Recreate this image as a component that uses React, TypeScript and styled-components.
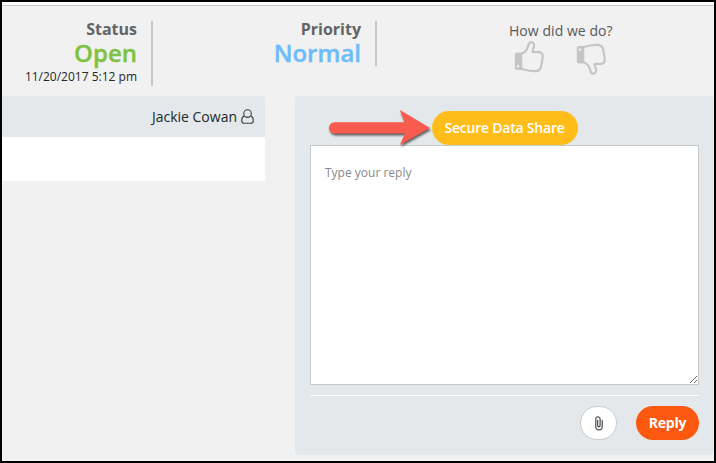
import React from "react";
import styled, { createGlobalStyle } from "styled-components";

const Global = createGlobalStyle`
  * { box-sizing: border-box; }
  body { margin: 0; font-family: "Open Sans", sans-serif; color: #23282c; }
`;
const Frame = styled.div`
  position: relative;
  width: 716px;
  height: 463px;
  border: 2px solid #000;
  background: #f1f1f1;
  overflow: hidden;
`;
const TopStrip = styled.div`
  height: 4px;
  background: #fff;
  border-bottom: 1px solid #c6c6c6;
`;
const Header = styled.header`
  display: flex;
  align-items: flex-start;
  height: 90px;
  padding-top: 15px;
`;
const Stat = styled.section<{ $width: number; $height: number }>`
  width: ${(p) => p.$width}px;
  height: ${(p) => p.$height}px;
  padding-right: 14px;
  border-right: 2px solid #c6c6c6;
  text-align: right;
  white-space: nowrap;
`;
const StatLabel = styled.div`
  font-size: 16px;
  line-height: 16px;
  font-weight: 700;
  color: #636466;
`;
const StatValue = styled.div<{ $color: string }>`
  padding-top: 1px;
  font-size: 24px;
  line-height: 30px;
  font-weight: 600;
  color: ${(p) => p.$color};
  -webkit-text-stroke: 0.4px ${(p) => p.$color};
`;
const StatDate = styled.div`
  font-size: 12px;
  line-height: 18px;
`;
const Feedback = styled.section`
  margin-left: 132px;
  width: 110px;
  color: #58595b;
  font-size: 14px;
  line-height: 20px;
  letter-spacing: 0.05px;
  white-space: nowrap;
`;
const Thumbs = styled.div`
  display: flex;
  gap: 30px;
  padding-left: 4px;
`;
const ThumbIcon = styled.svg<{ $down?: boolean }>`
  display: block;
  flex: none;
  width: 32px;
  height: 32px;
  margin-top: ${(p) => (p.$down ? 2 : 0)}px;
  transform: ${(p) => (p.$down ? "scaleY(-1)" : "none")};
`;
const Content = styled.main`
  display: flex;
  align-items: flex-start;
  gap: 30px;
`;
const Message = styled.article`
  width: 263px;
  height: 85px;
  background: #fff;
  border-top-right-radius: 3px;
  overflow: hidden;
`;
const MessageHead = styled.div`
  display: flex;
  align-items: center;
  justify-content: flex-end;
  gap: 4px;
  height: 41px;
  padding-right: 11px;
  background: #e4e8eb;
  font-size: 14px;
  white-space: nowrap;
`;
const ReplyPanel = styled.section`
  display: flex;
  flex-direction: column;
  width: 419px;
  height: 359px;
  padding: 15px 15px 0;
  border-radius: 4px;
  background: #e4e8eb;
`;
const Button = styled.button<{ $bg: string; $width: number; $weight: number; $tracking?: number }>`
  display: flex;
  align-items: center;
  justify-content: center;
  width: ${(p) => p.$width}px;
  height: 34px;
  padding: 0 0 2px;
  border: 0;
  border-radius: 17px;
  background: ${(p) => p.$bg};
  color: #fff;
  font: ${(p) => p.$weight} 14px "Open Sans", sans-serif;
  letter-spacing: ${(p) => p.$tracking ?? 0}px;
  white-space: nowrap;
`;
const AttachButton = styled(Button)`
  padding: 0;
  border: 1px solid #c9cbcc;
`;
const ShareRow = styled.div`
  display: flex;
  justify-content: center;
  height: 34px;
`;
const ReplyInput = styled.textarea`
  display: block;
  width: 389px;
  height: 240px;
  padding: 17px 14px;
  border: 1px solid #c6c8ca;
  border-radius: 0;
  outline: 0;
  background: #fff;
  font: 12px/20px "Open Sans", sans-serif;
  resize: both;
  &::placeholder { color: #8a8a8a; opacity: 1; }
`;
const Actions = styled.div`
  display: flex;
  justify-content: flex-end;
  gap: 19px;
  margin-top: 10px;
  padding-top: 10px;
  border-top: 1px solid #fff;
`;
const Arrow = styled.svg`
  position: absolute;
  left: 322px;
  top: 102px;
  width: 114px;
  height: 50px;
  filter: drop-shadow(1px 2px 1px rgba(0, 0, 0, 0.6));
`;

const Thumb = ({ down }: { down?: boolean }) => (
  <ThumbIcon $down={down} viewBox="0 0 32 32">
    <path d="M8.5 12.7C11.4 12 13.6 9.4 14.8 6.2C15.6 3.8 15.6 1.2 18 1.2C20.7 1.2 21.6 3.6 20.9 6.1C20.4 8 19.4 9.2 19.6 10.9C22.6 11.5 25.4 10.3 27.7 11.4C30.4 12.7 29.8 15.3 29.5 17.8L28.1 25.8C27.5 29.3 25.1 30.3 21.5 30.2C17 30.1 13 29.3 8.5 28" fill="none" stroke="#c5c5c4" strokeWidth="2.2" strokeLinejoin="round" />
    <path fillRule="evenodd" fill="#c5c5c4" d="M4.2 11.6H9.3V29H4C2.8 29 1.8 28.2 1.8 27V14C1.8 12.5 2.7 11.6 4.2 11.6ZM5 24A1.3 1.3 0 1 0 5 26.6A1.3 1.3 0 1 0 5 24Z" />
  </ThumbIcon>
);

export default function App() {
  return (
    <>
      <Global />
      <Frame>
        <TopStrip />
        <Header>
          <Stat $width={151} $height={65}>
            <StatLabel>Status</StatLabel>
            <StatValue $color="#7fc241">Open</StatValue>
            <StatDate>11/20/2017 5:12 pm</StatDate>
          </Stat>
          <Stat $width={224} $height={45}>
            <StatLabel>Priority</StatLabel>
            <StatValue $color="#6dbcf8">Normal</StatValue>
          </Stat>
          <Feedback>
            How did we do?
            <Thumbs>
              <Thumb />
              <Thumb down />
            </Thumbs>
          </Feedback>
        </Header>
        <Content>
          <Message>
            <MessageHead>
              Jackie Cowan
              <svg width="13" height="15" viewBox="0 0 13 15" fill="none" stroke="#3c4145" strokeWidth="1.1">
                <circle cx="6.5" cy="4.6" r="3.8" />
                <path d="M3.1 7.1C1.2 8 .7 9.5.7 11.5C.7 13.3 1.6 14.3 3.3 14.3H9.7C11.4 14.3 12.3 13.3 12.3 11.5C12.3 9.5 11.8 8 9.9 7.1" />
              </svg>
            </MessageHead>
          </Message>
          <ReplyPanel>
            <ShareRow>
              <Button $bg="#ffbd1a" $width={146} $weight={600} $tracking={-0.22}>Secure Data Share</Button>
            </ShareRow>
            <ReplyInput placeholder="Type your reply" />
            <Actions>
              <AttachButton $bg="#fff" $width={37} $weight={400} aria-label="Attach file">
                <svg width="8" height="15" viewBox="0 0 8 15" fill="none" stroke="#444" strokeWidth="1.15" strokeLinecap="round">
                  <path d="M2.7 4.2V9.6C2.7 11.3 5.1 11.3 5.1 9.6V3C5.1 0 .8 0 .8 3V10.7C.8 15 7.2 15 7.2 10.7V4.2" />
                </svg>
              </AttachButton>
              <Button $bg="#fc580f" $width={63} $weight={700} $tracking={-0.2}>Reply</Button>
            </Actions>
          </ReplyPanel>
        </Content>
        <Arrow viewBox="0 0 114 50">
          <path fill="#f95b4e" d="M10.5 18.3H80.5L75.8 6L106 24L75.8 41L81 29.5H10.5A5.6 5.6 0 0 1 10.5 18.3Z" />
        </Arrow>
      </Frame>
    </>
  );
}
